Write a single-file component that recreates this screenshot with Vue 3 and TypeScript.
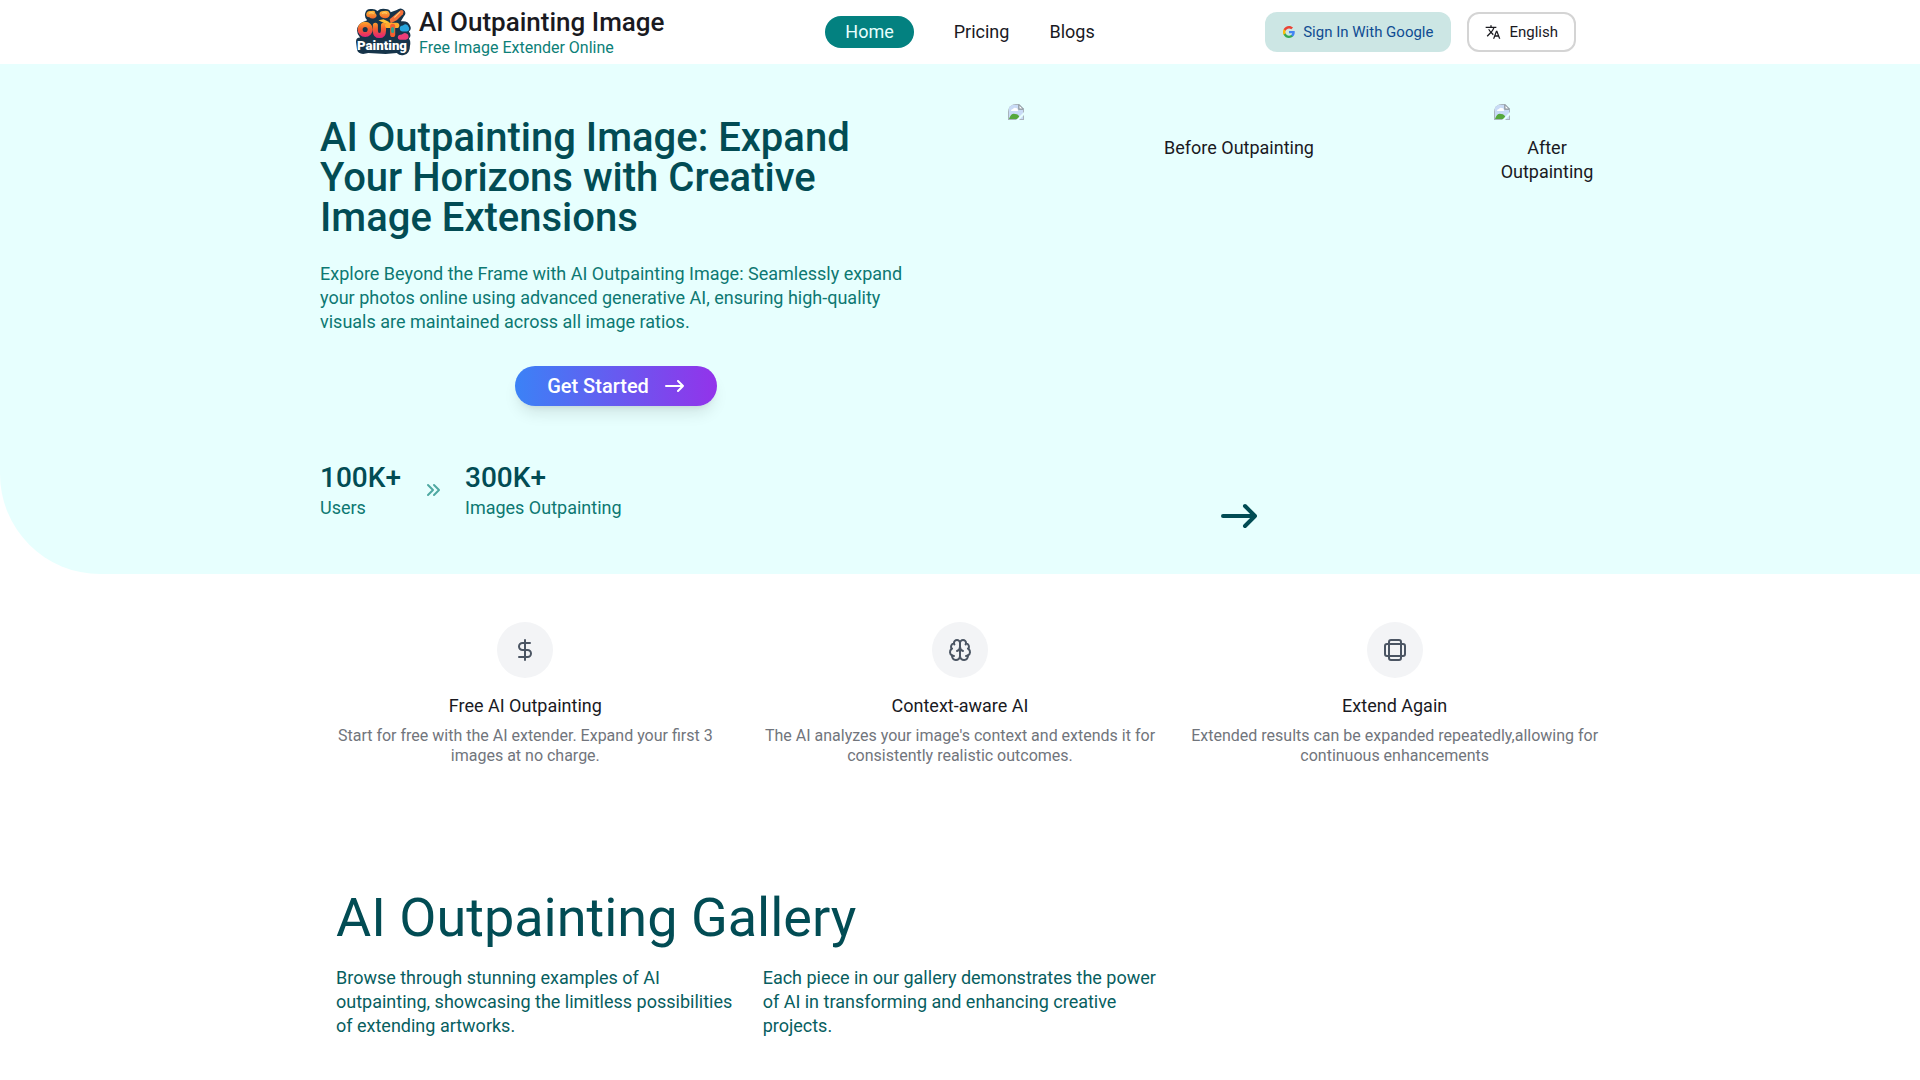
<script setup lang="ts">
interface NavLink {
  label: string
  active: boolean
}

interface Stat {
  value: string
  label: string
}

interface Feature {
  icon: 'dollar' | 'brain' | 'extend'
  title: string
  text: string
}

const navLinks: NavLink[] = [
  { label: 'Home', active: true },
  { label: 'Pricing', active: false },
  { label: 'Blogs', active: false },
]

const stats: Stat[] = [
  { value: '100K+', label: 'Users' },
  { value: '300K+', label: 'Images Outpainting' },
]

const features: Feature[] = [
  {
    icon: 'dollar',
    title: 'Free AI Outpainting',
    text: 'Start for free with the AI extender. Expand your first 3 images at no charge.',
  },
  {
    icon: 'brain',
    title: 'Context-aware AI',
    text: "The AI analyzes your image's context and extends it for consistently realistic outcomes.",
  },
  {
    icon: 'extend',
    title: 'Extend Again',
    text: 'Extended results can be expanded repeatedly,allowing for continuous enhancements',
  },
]

const previews: string[] = ['Before Outpainting', 'After Outpainting']

const galleryNotes: string[] = [
  'Browse through stunning examples of AI outpainting, showcasing the limitless possibilities of extending artworks.',
  'Each piece in our gallery demonstrates the power of AI in transforming and enhancing creative projects.',
]
</script>

<template>
  <div class="page">
    <header class="header">
      <div class="container header-row">
        <a class="brand" href="#">
          <svg class="logo" viewBox="0 0 54 47" aria-hidden="true">
            <defs>
              <linearGradient id="warm" x1="0" y1="0" x2="0" y2="1">
                <stop offset="0" stop-color="#ffb733" />
                <stop offset="1" stop-color="#f0642c" />
              </linearGradient>
              <linearGradient id="letter" gradientUnits="userSpaceOnUse" x1="0" y1="13" x2="0" y2="28">
                <stop offset="0" stop-color="#ffab2e" />
                <stop offset="0.500" stop-color="#f4602f" />
                <stop offset="1" stop-color="#e32672" />
              </linearGradient>
            </defs>
            <path
              d="M9 5q1-5 7-4q3 0 5 2q3-3 8-2q4 0 5 3l6-2q4-3 7 0q3 3 0 6l-3 5q7-1 9 4q2 4-1 6q3 4 0 7q2 3 1 7q0 8-6 9q-4 1-7-2l-11 1-17-1-5 1q-5 0-6-4l-1-8q0-4 4-4q-7-9 2-15l5-2q-3-3-2-7z"
              fill="#16344a"
            />
            <path d="M10 6q1-4 5-3q4-1 4 2q3 3-1 5q-3 1-5-1q-3 0-3-3z" fill="url(#warm)" />
            <path d="M23 6q0-3 4-3q5-1 6 2q1 4-4 5q-5 0-6-4z" fill="url(#warm)" />
            <path d="M33 11l6-5 5-4q4 0 2 4l-6 6-6 3z" fill="#f4703a" />
            <path d="M22 12l5-1 6 3-3 2z" fill="#ffc235" />
            <path d="M13 5q2-1 4 0M26 5q2-1 4 0M38 9l5-5" stroke="#ffd978" stroke-width="1" fill="none" />
            <ellipse cx="9" cy="21" rx="5" ry="5" fill="none" stroke="url(#letter)" stroke-width="5" />
            <path d="M19 17v5q0 5 4 5t4-5v-5" fill="none" stroke="url(#letter)" stroke-width="5" />
            <path d="M31 17h9" fill="none" stroke="#ffab2e" stroke-width="5" />
            <path d="M36 18v8" fill="none" stroke="#f4602f" stroke-width="5" />
            <path d="M36 20v3" fill="none" stroke="#2fa58b" stroke-width="3" />
            <path d="M43 20q0-3 3-3q4-3 6 2q1 3-2 4h-4q-3 0-3-3z" fill="#27a5dd" />
            <path d="M41 29q0-3 4-3q3-3 6 0q2 4-2 5h-6q-2 0-2-2z" fill="#ee3d78" />
            <text class="logo-word" x="1" y="41">Painting</text>
          </svg>
          <span class="brand-text">
            <span class="brand-name">AI Outpainting Image</span>
            <span class="brand-tag">Free Image Extender Online</span>
          </span>
        </a>

        <nav class="nav">
          <a
            v-for="link in navLinks"
            :key="link.label"
            href="#"
            class="nav-link"
            :class="{ active: link.active }"
            >{{ link.label }}</a
          >
        </nav>

        <div class="actions">
          <button type="button" class="btn sign-in">
            <svg class="google" viewBox="0 0 48 48" aria-hidden="true">
              <path fill="#4285F4" d="M47 24.5c0-1.600-.15-3.200-.42-4.700H24v9h12.900c-.56 3-2.250 5.500-4.800 7.200v6h7.750C44.400 37.900 47 31.800 47 24.500z" />
              <path fill="#34A853" d="M24 48c6.500 0 11.900-2.150 15.900-5.800l-7.750-6c-2.150 1.450-4.900 2.300-8.150 2.300-6.250 0-11.550-4.200-13.450-9.900H2.550v6.200C6.500 42.600 14.600 48 24 48z" />
              <path fill="#FBBC05" d="M10.550 28.600A14.400 14.400 0 0 1 10.550 19.400v-6.200H2.550a24 24 0 0 0 0 21.600z" />
              <path fill="#EA4335" d="M24 9.500c3.500 0 6.700 1.200 9.200 3.600l6.900-6.900C35.900 2.400 30.500 0 24 0 14.600 0 6.500 5.400 2.550 13.200l8 6.200C12.450 13.700 17.750 9.500 24 9.500z" />
            </svg>
            Sign In With Google
          </button>
          <button type="button" class="btn language">
            <svg class="translate" viewBox="0 0 24 24" aria-hidden="true">
              <path
                fill="currentColor"
                d="M12.870 15.070l-2.540-2.510.03-.03A17.520 17.520 0 0 0 14.070 6H17V4h-7V2H8v2H1v2h11.170C11.500 7.920 10.440 9.750 9 11.350 8.070 10.320 7.300 9.190 6.690 8h-2c.73 1.630 1.730 3.170 2.980 4.560l-5.090 5.020L4 19l5-5 3.110 3.110.76-2.040zM18.500 10h-2L12 22h2l1.120-3h4.750L21 22h2l-4.500-12zm-2.620 7l1.620-4.330L19.120 17h-3.240z"
              />
            </svg>
            English
          </button>
        </div>
      </div>
    </header>

    <main>
      <section class="hero">
        <div class="container hero-row">
          <div class="intro">
            <h1>AI Outpainting Image: Expand Your Horizons with Creative Image Extensions</h1>
            <p class="lead">
              Explore Beyond the Frame with AI Outpainting Image: Seamlessly expand your photos
              online using advanced generative AI, ensuring high-quality visuals are maintained
              across all image ratios.
            </p>
            <button type="button" class="cta">
              Get Started
              <svg class="cta-arrow" viewBox="0 0 20 12" aria-hidden="true">
                <path d="M1 6h17M13 1l5 5-5 5" />
              </svg>
            </button>
            <div class="stats">
              <template v-for="(stat, i) in stats" :key="stat.label">
                <svg v-if="i > 0" class="chevrons" viewBox="0 0 16 16" aria-hidden="true">
                  <path d="M3 3l5 5-5 5M9 3l5 5-5 5" />
                </svg>
                <div>
                  <div class="stat-value">{{ stat.value }}</div>
                  <div class="stat-label">{{ stat.label }}</div>
                </div>
              </template>
            </div>
          </div>

          <div class="previews">
            <div v-for="(caption, i) in previews" :key="caption" class="preview" :class="{ wide: i === 0 }">
              <figure>
                <svg class="missing" viewBox="0 0 16 16" aria-hidden="true">
                  <path d="M0 0h11l5 5v11H0z" fill="#a9b4bd" />
                  <path d="M1 1h9v5h5v9H1z" fill="#c9dbf6" />
                  <path d="M3 7q0-2 2-2q1-2 3-1q2 0 2 3z" fill="#fff" />
                  <path d="M1 15q2-6 6-5q4 0 5 5z" fill="#55a83c" />
                  <path d="M11 1v4h4z" fill="#fff" stroke="#8b969f" />
                  <path d="M8 16l8-8v3l-5 5z" fill="#e7fffe" />
                </svg>
                <figcaption>{{ caption }}</figcaption>
              </figure>
              <svg v-if="i === 0" class="big-arrow" viewBox="0 0 36 36" aria-hidden="true">
                <path d="M2 18h32M24 8l10 10-10 10" />
              </svg>
            </div>
          </div>
        </div>
      </section>

      <section class="container features">
        <article v-for="feature in features" :key="feature.title" class="feature">
          <div class="badge">
            <svg class="badge-icon" viewBox="0 0 24 24" aria-hidden="true">
              <path
                v-if="feature.icon === 'dollar'"
                d="M12 2v20M17 5H9.500a3.500 3.500 0 0 0 0 7h5a3.500 3.500 0 0 1 0 7H6"
              />
              <g v-else-if="feature.icon === 'brain'">
                <path d="M12 5a3 3 0 1 0-5.997.125 4 4 0 0 0-2.526 5.770 4 4 0 0 0 .556 6.588A4 4 0 1 0 12 18Z" />
                <path d="M12 5a3 3 0 1 1 5.997.125 4 4 0 0 1 2.526 5.770 4 4 0 0 1-.556 6.588A4 4 0 1 1 12 18Z" />
                <path d="M15 13a4.500 4.500 0 0 1-3-4 4.500 4.500 0 0 1-3 4" />
                <path d="M17.599 6.500a3 3 0 0 0 .399-1.375M6.003 5.125A3 3 0 0 0 6.401 6.500" />
                <path d="M3.477 10.896a4 4 0 0 1 .585-.396M19.938 10.500a4 4 0 0 1 .585.396" />
                <path d="M6 18a4 4 0 0 1-1.967-.516M19.967 17.484A4 4 0 0 1 18 18" />
              </g>
              <g v-else>
                <rect x="6" y="2" width="12" height="20" rx="2" />
                <rect x="2" y="6" width="20" height="12" rx="2" />
              </g>
            </svg>
          </div>
          <h3>{{ feature.title }}</h3>
          <p>{{ feature.text }}</p>
        </article>
      </section>

      <section class="container gallery">
        <h2>AI Outpainting Gallery</h2>
        <div class="gallery-notes">
          <p v-for="note in galleryNotes" :key="note">{{ note }}</p>
        </div>
      </section>
    </main>
  </div>
</template>

<style>
body {
  margin: 0;
  background: #fff;
}
</style>

<style scoped>
.page {
  font-family: Roboto, 'Liberation Sans', sans-serif;
  font-size: 18px;
  line-height: 24px;
  color: #1a1a1f;
  overflow: hidden;
}

h1,
h2,
h3,
p,
figure {
  margin: 0;
}

button {
  font: inherit;
  border: 0;
  cursor: pointer;
}

a {
  color: inherit;
  text-decoration: none;
}

path {
  stroke-linecap: round;
  stroke-linejoin: round;
}

.container {
  max-width: 1280px;
  margin: 0 auto;
  box-sizing: border-box;
}

.header-row {
  display: grid;
  grid-template-columns: 1fr auto 1fr;
  align-items: center;
  height: 64px;
  padding: 0 24px;
}

.brand {
  display: flex;
  align-items: center;
  gap: 8px;
  padding: 0 12px;
}

.logo {
  width: 55px;
  height: 48px;
}

.logo-word {
  font-family: Roboto, sans-serif;
  font-size: 13px;
  font-weight: 900;
  fill: #fff;
}

.brand-text {
  display: flex;
  flex-direction: column;
}

.brand-name {
  font-size: 26px;
  line-height: 32px;
  font-weight: 500;
}

.brand-tag {
  font-size: 16px;
  line-height: 20px;
  color: #0d8078;
}

.nav {
  display: flex;
  gap: 40px;
}

.nav-link {
  padding: 4px 0;
}

.nav-link.active {
  padding: 4px 20px;
  border-radius: 16px;
  background: #038180;
  color: #e7fffe;
}

.actions {
  display: flex;
  justify-content: flex-end;
  gap: 16px;
}

.btn {
  display: flex;
  align-items: center;
  gap: 8px;
  height: 40px;
  padding: 0 18px;
  border-radius: 12px;
  font-size: 15px;
}

.sign-in {
  background: #cce6e4;
  color: #0f4c92;
}

.google {
  width: 12px;
  height: 12px;
}

.language {
  padding: 0 16px;
  background: #fff;
  border: 2px solid #d4d4d4;
  color: #1a1a1f;
}

.translate {
  width: 16px;
  height: 16px;
}

.hero {
  background: #e7fffe;
  border-bottom-left-radius: 100px;
}

.hero-row {
  display: grid;
  grid-template-columns: 1fr 1fr;
  gap: 96px;
  min-height: 510px;
  padding: 40px 0;
}

.intro {
  display: flex;
  flex-direction: column;
  justify-content: center;
}

h1 {
  font-size: 40px;
  line-height: 40px;
  font-weight: 500;
  color: #024c54;
}

.lead {
  margin-top: 24px;
  color: #0d7872;
}

.cta {
  display: flex;
  align-items: center;
  justify-content: center;
  align-self: center;
  gap: 16px;
  height: 40px;
  margin-top: 32px;
  padding: 0 32px;
  border-radius: 20px;
  background: linear-gradient(90deg, #3b82f6, #9333ea);
  box-shadow: 0 10px 15px -3px rgba(0, 0, 0, 0.1), 0 4px 6px -4px rgba(0, 0, 0, 0.1);
  color: #fff;
  font-size: 20px;
  font-weight: 500;
}

.cta-arrow {
  width: 20px;
  height: 12px;
  fill: none;
  stroke: currentColor;
  stroke-width: 2;
}

.stats {
  display: flex;
  align-items: center;
  gap: 24px;
  margin-top: 54px;
}

.stat-value {
  font-size: 28px;
  line-height: 36px;
  font-weight: 500;
  color: #024c54;
}

.stat-label {
  color: #0d7872;
}

.chevrons {
  width: 16px;
  height: 16px;
  fill: none;
  stroke: #4fa9a2;
  stroke-width: 2;
}

.previews {
  display: flex;
  gap: 24px;
}

.preview {
  display: flex;
  flex-direction: column;
  justify-content: space-between;
  align-items: center;
  flex: 0 0 106px;
}

.preview.wide {
  flex: 1;
}

.preview figure {
  width: 100%;
}

.missing {
  display: block;
  width: 16px;
  height: 16px;
  border-radius: 8px 0 0 0;
}

figcaption {
  padding: 16px 6px 0;
  text-align: center;
}

.big-arrow {
  width: 36px;
  height: 36px;
  fill: none;
  stroke: #024c54;
  stroke-width: 4;
}

.features {
  display: grid;
  grid-template-columns: repeat(3, 1fr);
  gap: 24px;
  padding: 48px 0;
  text-align: center;
}

.badge {
  display: flex;
  align-items: center;
  justify-content: center;
  width: 56px;
  height: 56px;
  margin: 0 auto 16px;
  border-radius: 50%;
  background: #f3f4f6;
}

.badge-icon {
  width: 24px;
  height: 24px;
  fill: none;
  stroke: #4b5563;
  stroke-width: 2;
}

h3 {
  font-size: 18px;
  font-weight: 400;
}

.feature p {
  margin-top: 8px;
  font-size: 16px;
  line-height: 20px;
  color: #71757c;
}

.gallery {
  padding: 72px 0 40px;
}

h2 {
  padding: 0 16px;
  font-size: 54px;
  line-height: 64px;
  font-weight: 400;
  color: #024c54;
}

.gallery-notes {
  display: grid;
  grid-template-columns: repeat(3, 1fr);
  margin-top: 16px;
}

.gallery-notes p {
  padding: 0 8px 0 16px;
  color: #075e60;
}
</style>
